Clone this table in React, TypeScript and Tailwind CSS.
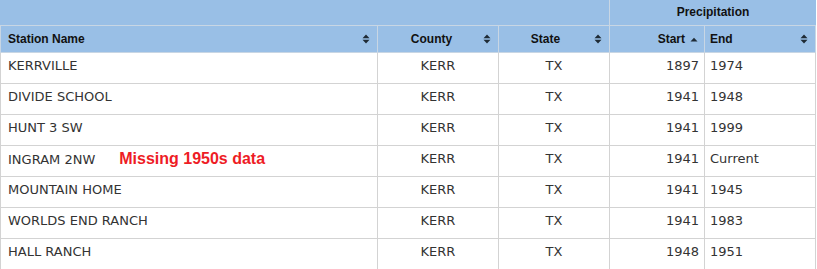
const rows = [
  { name: 'KERRVILLE', county: 'KERR', state: 'TX', start: '1897', end: '1974' },
  { name: 'DIVIDE SCHOOL', county: 'KERR', state: 'TX', start: '1941', end: '1948' },
  { name: 'HUNT 3 SW', county: 'KERR', state: 'TX', start: '1941', end: '1999' },
  { name: 'INGRAM 2NW', county: 'KERR', state: 'TX', start: '1941', end: 'Current', note: 'Missing 1950s data' },
  { name: 'MOUNTAIN HOME', county: 'KERR', state: 'TX', start: '1941', end: '1945' },
  { name: 'WORLDS END RANCH', county: 'KERR', state: 'TX', start: '1941', end: '1983' },
  { name: 'HALL RANCH', county: 'KERR', state: 'TX', start: '1948', end: '1951' },
];

function SortBoth() {
  return (
    <svg width="8" height="10" viewBox="0 0 8 10" className="shrink-0">
      <path d="M0.5 4.2 L4 0.6 L7.5 4.2 Z M0.5 5.8 L7.5 5.8 L4 9.4 Z" fill="#1f2b36" />
    </svg>
  );
}

function SortUp() {
  return (
    <svg width="8" height="5" viewBox="0 0 8 5" className="shrink-0">
      <path d="M0.5 4.5 L4 0.8 L7.5 4.5 Z" fill="#1f2b36" />
    </svg>
  );
}

const cols = 'grid grid-cols-[378px_121px_111px_95px_111px]';
const head = 'h-[27px] border-b border-r border-[#c8d6e4] bg-[#99bfe6] flex items-center text-[12px] font-bold text-[#111]';
const cell = 'h-[31px] border-b border-r border-[#d3d3d3] pt-[5px] leading-[15px] text-[13px] text-[#333]';

export default function App() {
  return (
    <div className="w-[817px] h-[269px] overflow-hidden bg-white" style={{ fontFamily: '"Liberation Sans", Arial, sans-serif' }}>
      <div className="w-[816px]">
        <div className="grid grid-cols-[610px_206px]">
          <div className="h-[26px] border-b border-r border-[#c8d6e4] bg-[#99bfe6]" />
          <div className="h-[26px] border-b border-[#c8d6e4] bg-[#99bfe6] flex items-center justify-center pb-[1px] text-[12px] font-bold text-[#111]">
            Precipitation
          </div>
        </div>
        <div className={cols}>
          <div className={`${head} border-l pl-[7px] pr-[7px] justify-between`}>
            <span>Station Name</span>
            <SortBoth />
          </div>
          <div className={`${head} pl-[8px] pr-[7px]`}>
            <span className="flex-1 text-center pr-[6px]">County</span>
            <SortBoth />
          </div>
          <div className={`${head} pl-[8px] pr-[7px]`}>
            <span className="flex-1 text-center pr-[10px]">State</span>
            <SortBoth />
          </div>
          <div className={`${head} bg-[#9fbedb] justify-end pr-[6px] gap-[5px]`}>
            <span>Start</span>
            <SortUp />
          </div>
          <div className={`${head} pl-[5px] pr-[7px] justify-between`}>
            <span>End</span>
            <SortBoth />
          </div>
        </div>
        <div style={{ fontFamily: '"DejaVu Sans", Verdana, sans-serif' }}>
          {rows.map((r) => (
            <div key={r.name} className={cols}>
              <div className={`${cell} border-l pl-[7px] whitespace-nowrap`}>
                {r.name}
                {r.note && (
                  <span
                    className="ml-[24px] text-[16px] font-bold text-[#ee1c25]"
                    style={{ fontFamily: '"Liberation Sans", Arial, sans-serif' }}
                  >
                    {r.note}
                  </span>
                )}
              </div>
              <div className={`${cell} text-center`}>{r.county}</div>
              <div className={`${cell} text-center`}>{r.state}</div>
              <div className={`${cell} text-right pr-[5px]`}>{r.start}</div>
              <div className={`${cell} pl-[5px]`}>{r.end}</div>
            </div>
          ))}
        </div>
      </div>
    </div>
  );
}
